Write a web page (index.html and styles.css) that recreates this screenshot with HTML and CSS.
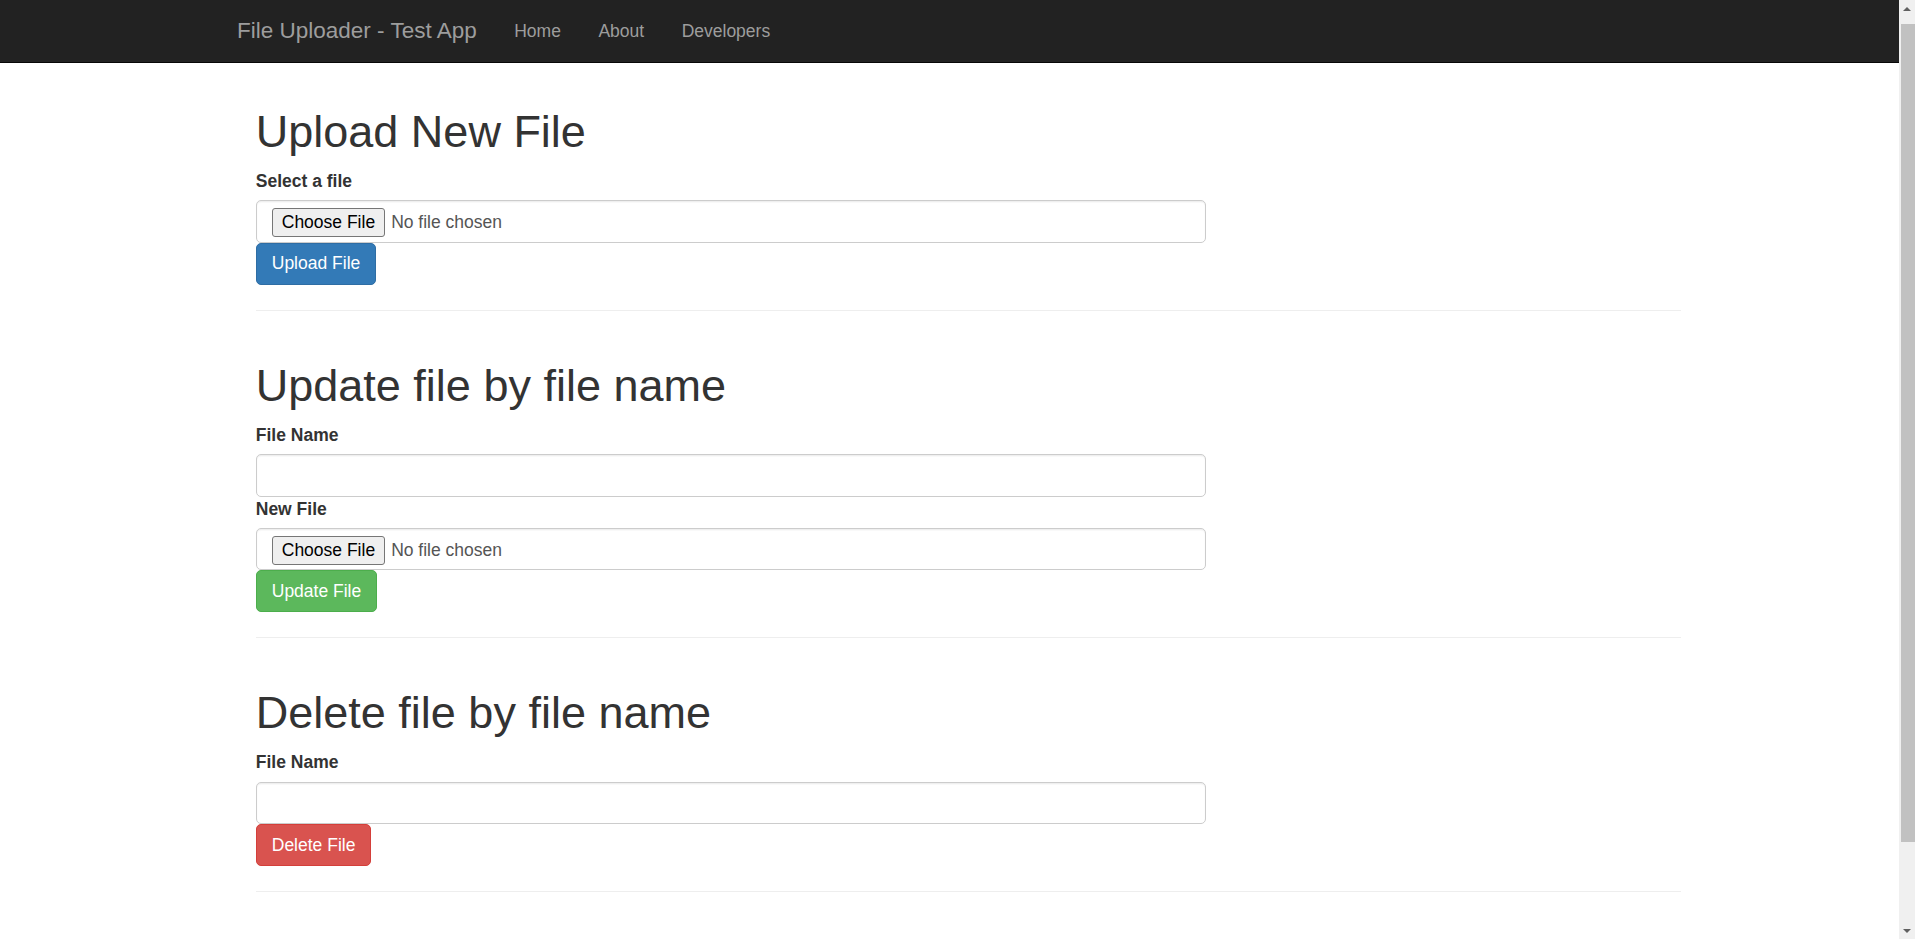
FILE: index.html
```html
<!DOCTYPE html>
<html lang="en">
<head>
<meta charset="utf-8">
<title>File Uploader - Test App</title>
<link rel="stylesheet" href="styles.css">
</head>
<body>
<nav class="navbar">
  <div class="navbar-inner">
    <a class="brand" href="#">File Uploader - Test App</a>
    <ul class="nav">
      <li><a href="#">Home</a></li>
      <li><a href="#">About</a></li>
      <li><a href="#">Developers</a></li>
    </ul>
  </div>
</nav>
<main class="page">
  <div class="content">
    <section class="section">
      <h1>Upload New File</h1>
      <form class="form">
        <label class="label">Select a file</label>
        <input type="file" class="form-control file-input">
        <button type="button" class="btn btn-primary">Upload File</button>
      </form>
      <hr class="divider">
    </section>
    <section class="section">
      <h1>Update file by file name</h1>
      <form class="form">
        <label class="label">File Name</label>
        <input type="text" class="form-control">
        <label class="label">New File</label>
        <input type="file" class="form-control file-input">
        <button type="button" class="btn btn-success">Update File</button>
      </form>
      <hr class="divider">
    </section>
    <section class="section">
      <h1>Delete file by file name</h1>
      <form class="form">
        <label class="label">File Name</label>
        <input type="text" class="form-control">
        <button type="button" class="btn btn-danger">Delete File</button>
      </form>
      <hr class="divider">
    </section>
  </div>
</main>
<div class="scrollbar" aria-hidden="true">
  <span class="scroll-arrow scroll-up"></span>
  <span class="scroll-thumb"></span>
  <span class="scroll-arrow scroll-down"></span>
</div>
</body>
</html>
```

FILE: styles.css
```css
body {
  margin: 0;
  padding-right: 16px;
  font-family: "Liberation Sans", Arial, Helvetica, sans-serif;
  font-size: 17.5px;
  line-height: 25px;
  color: #333;
  background: #fff;
}

/* Window scrollbar drawn over the right edge */
.scrollbar {
  position: fixed;
  top: 0;
  right: 0;
  bottom: 0;
  width: 16px;
  background: #f0f0f0;
  display: flex;
  flex-direction: column;
  align-items: flex-end;
}

.scroll-arrow {
  height: 17px;
  width: 16px;
  display: flex;
  align-items: center;
  justify-content: center;
}

.scroll-arrow::before {
  content: "";
  width: 0;
  height: 0;
  border-left: 4.5px solid transparent;
  border-right: 4.5px solid transparent;
}

.scroll-up::before {
  border-bottom: 4.5px solid #606060;
}

.scroll-down::before {
  border-top: 4.5px solid #606060;
}

.scroll-thumb {
  margin-top: 7px;
  width: 14px;
  height: 818px;
  background: #c1c1c1;
}

.scroll-down {
  margin-top: auto;
}

/* Navbar */
.navbar {
  background: #222;
  border-bottom: 1px solid #080808;
  height: 62px;
}

.navbar-inner {
  width: 1462.5px;
  margin: 0 auto;
  padding: 0 18.75px;
  box-sizing: border-box;
  display: flex;
}

.brand {
  margin-left: -18.75px;
  padding: 17.5px 18.75px 19.5px;
  font-size: 22.5px;
  line-height: 25px;
  color: #9d9d9d;
  text-decoration: none;
}

.nav {
  list-style: none;
  margin: 0;
  padding: 0;
  display: flex;
}

.nav a {
  display: block;
  padding: 18.5px 18.75px;
  font-size: 17.5px;
  line-height: 25px;
  color: #9d9d9d;
  text-decoration: none;
}

/* Page */
.page {
  width: 1462.5px;
  margin: 0 auto;
  padding: 0 18.75px 146px;
  box-sizing: border-box;
}

.content {
  width: 1462.5px;
  padding: 0 18.75px;
  box-sizing: border-box;
}

.section {
  padding-top: 50px;
}

.section:first-child {
  padding-top: 44px;
}

.section h1 {
  margin: 0 0 12.5px;
  font-size: 45px;
  line-height: 49.5px;
  font-weight: 500;
  color: #333;
}

.form {
  width: 66.6667%;
  display: flex;
  flex-direction: column;
  align-items: flex-start;
}

.label {
  font-weight: bold;
  margin-bottom: 6.25px;
}

.form-control {
  align-self: stretch;
  box-sizing: border-box;
  height: 42.5px;
  margin: 0;
  padding: 7.5px 15px;
  font-family: inherit;
  font-size: 17.5px;
  line-height: 25px;
  color: #555;
  background: #fff;
  border: 1px solid #ccc;
  border-radius: 5px;
  box-shadow: inset 0 1.25px 1.25px rgba(0, 0, 0, 0.075);
}

.file-input {
  padding-top: 7px;
  padding-bottom: 4px;
}

.file-input::file-selector-button {
  font-family: inherit;
  font-size: 17.5px;
  line-height: 23px;
  height: 29px;
  padding: 1px 9px;
  margin: 0 6px 0 0;
  color: #000;
  background: #efefef;
  border: 1px solid #767676;
  border-radius: 3px;
}

.btn {
  display: inline-block;
  margin: 0;
  padding: 7.5px 15px;
  font-family: inherit;
  font-size: 17.5px;
  line-height: 25px;
  color: #fff;
  border: 1px solid transparent;
  border-radius: 5px;
  cursor: pointer;
}

.btn-primary {
  background: #337ab7;
  border-color: #2e6da4;
}

.btn-success {
  background: #5cb85c;
  border-color: #4cae4c;
}

.btn-danger {
  background: #d9534f;
  border-color: #d43f3a;
}

.divider {
  margin: 25px 0 0;
  border: 0;
  border-top: 1px solid #eee;
  height: 0;
}
```
